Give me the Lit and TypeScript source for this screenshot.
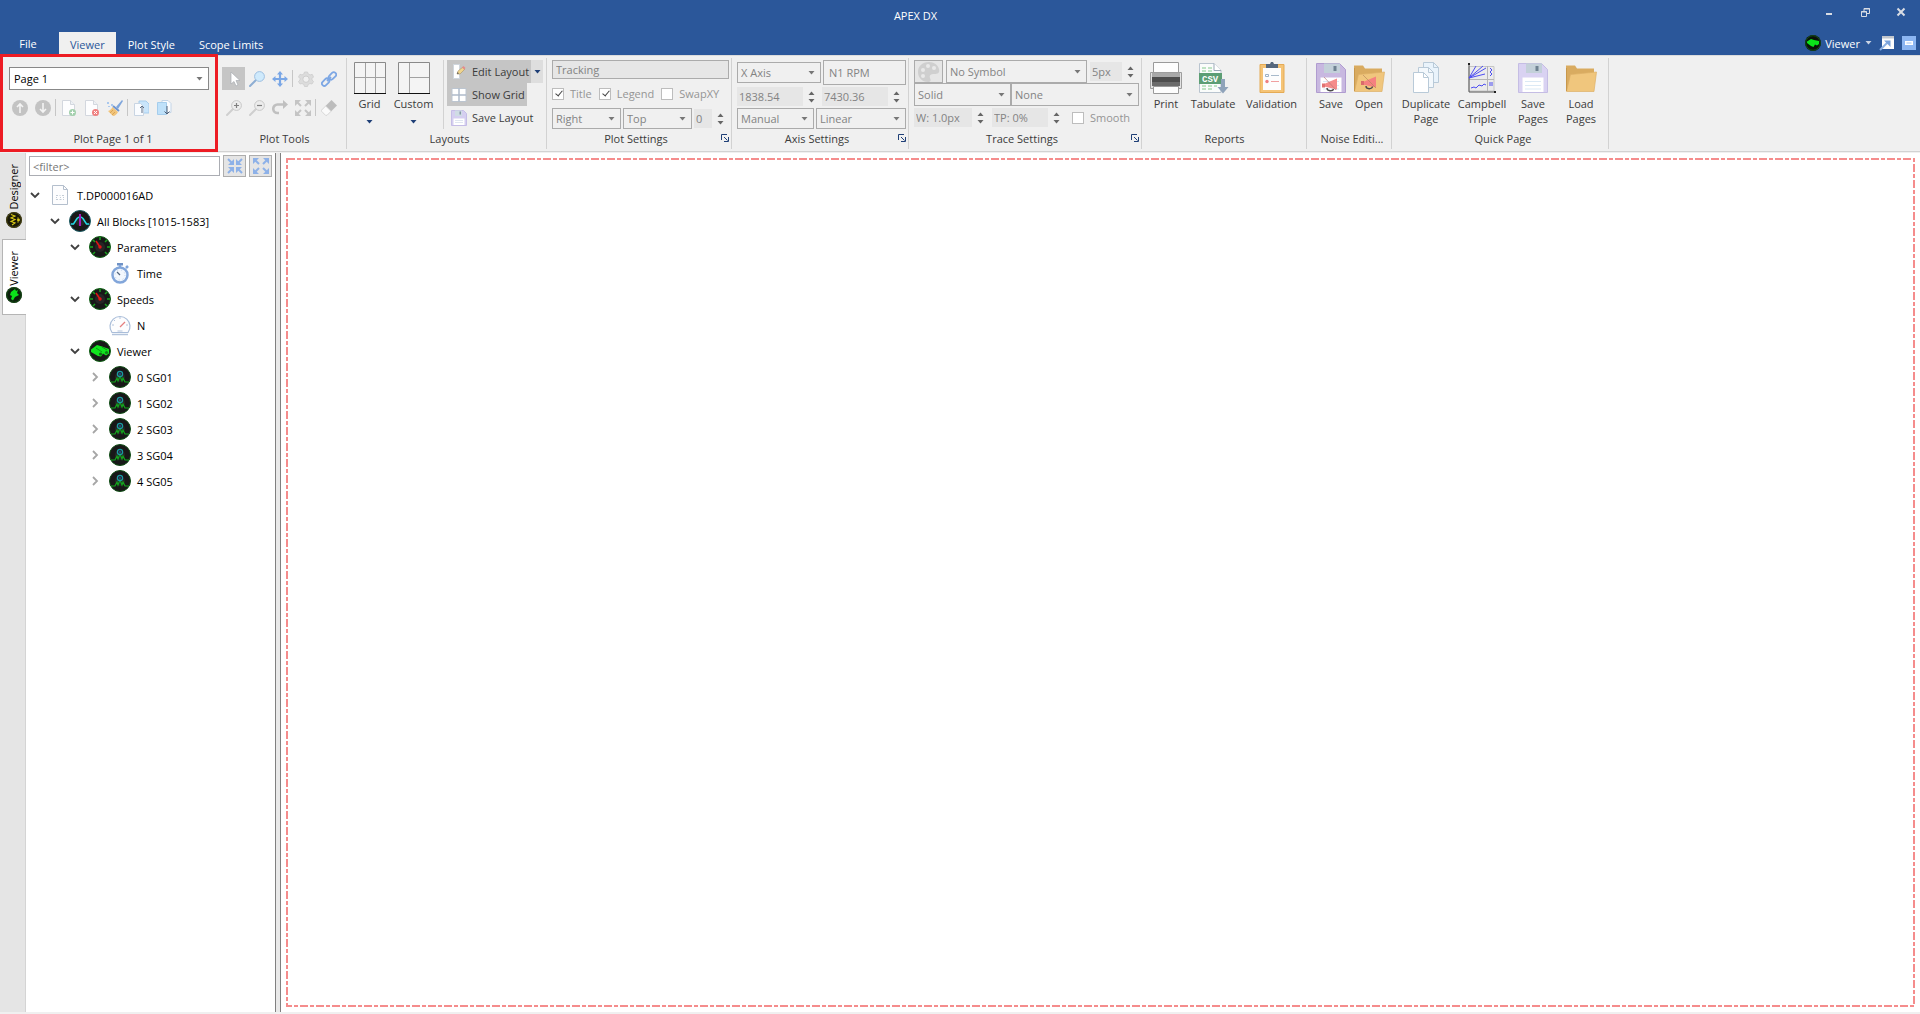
import { LitElement, html, svg, css } from "lit";
import { customElement, property } from "lit/decorators.js";

const draw = (size: number, body: unknown) =>
  html`<svg class="icon" width=${size} height=${size} viewBox="0 0 ${size} ${size}" aria-hidden="true">${body}</svg>`;

/* ---------- small toolbar glyphs, 16 px ---------- */
const circleArrow = (d: string) => svg`<circle cx="8" cy="8" r="8" fill="#c3c3c3"/><path d=${d} fill="none" stroke="#f4f4f4" stroke-width="1.6"/>`;
const sheet = svg`<path d="M1.5 .5h8l4 4v11h-12z" fill="#fdfdfe" stroke="#d3d7de"/><path d="M9.5 .5v4h4" fill="#eef1f5" stroke="#d3d7de"/>`;
const lens = (fill: string, ring: string, handle: string, mark: unknown) => svg`
  <path d="M1 15l6-6" stroke=${handle} stroke-width="2" stroke-linecap="round"/>
  <circle cx="10.5" cy="5.5" r="4.9" fill=${fill} stroke=${ring}/>${mark}`;
const corners = (color: string, lines: string, heads: string) =>
  svg`<path d=${lines} fill="none" stroke=${color} stroke-width="2"/><path d=${heads} fill=${color}/>`;
const OUT = ["M2 2l4 4M14 2l-4 4M2 14l4-4M14 14l-4-4", "M0 0h6L0 6zM16 0v6l-6-6zM0 16v-6l6 6zM16 16h-6l6-6z"];
const IN = ["M1 1l4 4M15 1l-4 4M1 15l4-4M15 15l-4-4", "M7 1v6H1zM9 1v6h6zM7 15V9H1zM9 15V9h6z"];

const small: Record<string, unknown> = {
  up: circleArrow("M8 13V4M5 7l3-3 3 3"),
  down: circleArrow("M8 3v9M5 9l3 3 3-3"),
  addPage: svg`${sheet}<circle cx="11.5" cy="12.5" r="3.5" fill="#a3d0ad"/><path d="M11.5 10.5v4M9.500 12.5h4" stroke="#fff"/>`,
  delPage: svg`${sheet}<circle cx="11.5" cy="12.5" r="3.5" fill="#f08080"/><path d="M10 11l3 3M13 11l-3 3" stroke="#fff"/>`,
  broom: svg`<path d="M9 7l6-7 1 1-5 8z" fill="#7fa6dc"/><path d="M6 6l6 5" stroke="#6f95cf" stroke-width="2"/><path d="M5.5 7l5.500 5c-1 2-3 4-5 4l-5-5c2-.5 3.500-2 4.500-4z" fill="#f1c47b"/><path d="M3 13l3-3M5 15l3-3" stroke="#d9a557"/><path d="M0 2h2v2H0zM4 4h2v2H4zM1 6h2v1H1z" fill="#a9c8ee"/>`,
  pageUp: svg`<path d="M6 1h7l3 3v9H6z" fill="#c9e5fb" stroke="#a8cdec"/><path d="M1.5 3.5h6l3 3v9h-9z" fill="#fafcff" stroke="#c9d5e3"/><path d="M9 13V6M7 8l2-2 2 2" fill="none" stroke="#5c6e86"/>`,
  pageDown: svg`<path d="M6 .5h6l3 3v9H6z" fill="#fafcff" stroke="#c3d4e6"/><path d="M1.5 2.5h9v12h-9z" fill="#bfe1fa" stroke="#a5cdec"/><path d="M11 6v8M8.5 11.5L11 14l2.500-2.500" fill="none" stroke="#4f5f76"/>`,
  pointer: svg`<path d="M5 1v12l3-2.500 2 4.500 2-1-2-4.500h4z" fill="#fff" stroke="#a9adb3" stroke-width=".7"/>`,
  zoom: lens("#cfeafc", "#9ebfe0", "#8eaed3", null),
  zoomIn: lens("#ececec", "#c8c8c8", "#cfcfcf", svg`<path d="M10.5 3v5M8 5.5h5" stroke="#808080" stroke-width="1.2"/>`),
  zoomOut: lens("#ececec", "#c8c8c8", "#cfcfcf", svg`<path d="M8 5.5h5" stroke="#808080" stroke-width="1.2"/>`),
  move: svg`<path d="M8 2v12M2 8h12" stroke="#7aa7e6" stroke-width="2.2"/><path d="M8 0l3 3.500H5zM8 16l3-3.500H5zM0 8l3.500-3v6zM16 8l-3.500-3v6z" fill="#7aa7e6"/>`,
  gear: svg`<path d="M6.5 1h3l.7 2 2 .9 2-.6 1.300 2.600L14 7.500v1.500l1.500 1.500-1.500 2.500-2-.5-1.800 1-.7 2h-3l-.7-2-1.800-1-2 .5L.5 10.500 2 9V7.500L.5 5.900 2 3.300l2 .6 1.800-.9z" fill="#dcdcdc" stroke="#cdcdcd" stroke-width=".8"/><circle cx="8" cy="8.2" r="3.2" fill="#f0f0f0" stroke="#cdcdcd"/>`,
  link: svg`<g fill="none" stroke="#7da7e4" stroke-width="1.8"><rect x="7.2" y="2.6" width="8.5" height="4.8" rx="2.4" transform="rotate(-45 11.4 5)"/><rect x=".4" y="8.8" width="8.5" height="4.8" rx="2.4" transform="rotate(-45 4.6 11.2)"/><path d="M6 10l4-4"/></g>`,
  redo: svg`<path d="M12 4.500H5.500a4 4 0 0 0 0 8.500H7" fill="none" stroke="#c0c0c0" stroke-width="2.6"/><path d="M11 0l5 4.500-5 4.500z" fill="#c0c0c0"/>`,
  expandGrey: corners("#c4c4c4", OUT[0], OUT[1]),
  expand: corners("#8db1e8", OUT[0], OUT[1]),
  collapse: corners("#8db1e8", IN[0], IN[1]),
  eraser: svg`<path d="M10.500 0L16 5.500l-6 6L4.500 6z" fill="#bcbcbc"/><path d="M4.700 6L10 11.300 6 15.300H4.500L.5 11.200v-1z" fill="#fafafa" stroke="#cfcfcf" stroke-width=".8"/>`,
  editLayout: svg`<path d="M2.5 .5h6v14h-6z" fill="#fff" stroke="#cfd6de"/><path d="M6 10l1-3 5-4 2 2-5 5z" fill="#f0d48c" stroke="#a8936a" stroke-width=".6"/><path d="M11 3.500L12.500 2l2 2L13 5.500z" fill="#e58b8b"/><path d="M6 10l.6-2 1.400 1.400z" fill="#555"/>`,
  showGrid: svg`<path d="M1 1.500h14v13H1z" fill="#fff" stroke="#bcc5d0"/><path d="M8 1.500v13M1 8h14" stroke="#aebaca" stroke-width="1.5"/>`,
  disk: svg`<path d="M.5.5h12l3 3v12H.5z" fill="#d5cff0" stroke="#c5bde6"/><path d="M4 .5h7V6H4z" fill="#cfdce4"/><path d="M8.5 1.500h1.500v3H8.500z" fill="#8496a4"/><path d="M2.500 8.500h11V15h-11z" fill="#fff"/><path d="M4 10.500h8M4 12.500h8" stroke="#dfe6f0"/>`,
  popout: svg`<path d="M3 1h12v13H3z" fill="#fdfdfd"/><path d="M3 1h12v2.500H3z" fill="#c1c6cd"/><path d="M1 15l8-8" stroke="#8bb0e2" stroke-width="2"/><path d="M5 5.500h6.500V12z" fill="#7aa3dc"/>`,
  minRibbon: svg`<path d="M1 1h14v14H1z" fill="#8cb6f2"/><path d="M4 6h8v4H4z" fill="#fff"/><path d="M5.500 8h5" stroke="#8cb6f2" stroke-width=".8"/>`,
  minimise: svg`<path d="M5 9h6v2H5z" fill="#d9dde4"/>`,
  restore: svg`<g fill="none" stroke="#d9dde4"><path d="M4.500 7.500h5v5h-5zM7 7V4.500h5.500v5H10"/><path d="M4 8h6M7 5h6" /></g>`,
  close: svg`<path d="M4.500 4.500l7 7M11.500 4.500l-7 7" stroke="#d9dde4" stroke-width="2"/>`,
  designer: svg`<circle cx="8" cy="8" r="8" fill="#191908"/><circle cx="8" cy="8" r="7.3" fill="none" stroke="#4f4a12"/><path d="M5 2.500l4 1.500-4 2 4 1.500-4 2 4 1.500-3 2" fill="none" stroke="#d9c916" stroke-width="1.1"/><path d="M12 5v6" stroke="#8f8612"/><circle cx="12.5" cy="8" r="1.4" fill="#d9c916"/>`,
  viewerTab: svg`<circle cx="8" cy="8" r="8" fill="#0d1f0d"/><circle cx="8" cy="8" r="7.3" fill="none" stroke="#155015"/><path d="M9 2L5 5 4 8l2 1-1 3 2 1.500 2-3.500 4-2-2-2 1-3-2 1z" fill="#0be31a"/>`,
  viewerTop: svg`<circle cx="8" cy="8" r="8" fill="#0a120a"/><circle cx="8" cy="8" r="7.3" fill="none" stroke="#145014"/><path d="M2 6.500L6 4l3 1 5 1v3l-2 1.500-2-1L8.500 12 6 11 2 8z" fill="#0be31a"/>`,
};

/* ---------- large ribbon glyphs, 32 px ---------- */
const diskBig = (body: string, edge: string, extra: unknown) => svg`
  <path d="M1.500 1.500h23l6 6v23h-29z" fill=${body} stroke=${edge}/>
  <path d="M9 1.500h16v9.500H9z" fill="#c3d0d9"/><path d="M18.500 4h3v5h-3z" fill="#6f8291"/>
  <path d="M5.500 15.500h21V30h-21z" fill="#fff"/><path d="M8 19.500h16M8 23.500h16M8 27h16" stroke="#dbe9f5"/>${extra}`;
const horn = svg`<path d="M9 22l13-5.500v11L9 24.500z" fill="#f58b8b"/><path d="M7 21.500h3v4H7z" fill="#e07272"/><path d="M12 26c0 3.500 6 3.500 6.500 1" fill="none" stroke="#4a4a4a" stroke-width="1.4"/><path d="M9 15l12 13" stroke="#b87878" stroke-width=".7"/>`;
const folder = (extra: unknown) => svg`<path d="M1 3.500h9l2 3h17V28H1z" fill="#d9ab60"/><path d="M5.500 12.500L31.500 10 29 29.500H1.500z" fill="#f0c67d" stroke="#dcb067" stroke-width=".7"/><path d="M1.500 29V6" stroke="#c8984c"/>${extra}`;
const copySheet = (x: number, y: number, fill: string) => svg`<path d="M${x + 0.5} ${y + 0.5}h10l5 5v15h-15z" fill=${fill} stroke="#b9cad8"/><path d="M${x + 10.5} ${y + 0.5}v5h5" fill="none" stroke="#b9cad8"/>`;

const large: Record<string, unknown> = {
  grid: svg`<path d="M.5.5h31v31H.5z" fill="#f4f4f4" stroke="#8a8a8a"/><path d="M11.500 1v30M21.500 1v30M1 15.500h30" stroke="#a2a2a2"/><path d="M0 31.500h32" stroke="#111"/>`,
  custom: svg`<path d="M.5.5h31v31H.5z" fill="#f4f4f4" stroke="#8a8a8a"/><path d="M11.500 1v30M11 15.500h20" stroke="#a2a2a2"/><path d="M0 31.500h32" stroke="#111"/>`,
  print: svg`<path d="M3.500.5h25v12h-25z" fill="#fdfdfd" stroke="#9a9a9a"/><path d="M.5 10.500h31v16H.5z" fill="#e3e3e3" stroke="#9d9d9d"/><path d="M2 11h28v4H2z" fill="#a8a8a8"/><path d="M2 15h28v5H2z" fill="#4d4d4d"/><path d="M2 20h28v4H2z" fill="#6b6b6b"/><path d="M3.500 24.500h25v7h-25z" fill="#fdfdfd" stroke="#9a9a9a"/>`,
  csv: svg`<path d="M2.500 1.500h14.500l7 7v22H2.500z" fill="#fafcfb" stroke="#b9c4cf"/><path d="M17 1.500v7h7" fill="#fff" stroke="#9aa8b6"/><path d="M5 6h4M11 6h4M5 9h4M11 9h4M5 24h4M11 24h4M5 27h4M11 27h4M17 24h3" stroke="#bfe3c4" stroke-width="1.8"/><path d="M2 11h23v11H2z" fill="#5c9e74"/><text x="5" y="20" font-size="9" font-weight="bold" fill="#fff" font-family="Liberation Mono, monospace">CSV</text><path d="M24 17h4v8h3.500L26 31.500 20.500 25H24z" fill="#8fa3ba"/>`,
  clip: svg`<path d="M4 2.500h24v28H4z" fill="#f5c477" stroke="#e5ab55"/><path d="M7 6h18v22H7z" fill="#fdfdfd"/><path d="M10 6V2h4l1-2h2l1 2h4v4z" fill="#56677c"/><path d="M9.500 12.500h3v2h-3z" fill="#fff" stroke="#9db1c5"/><circle cx="11" cy="19.500" r="1.7" fill="#ee8080"/><path d="M15 13.500h8" stroke="#a8bacb"/><path d="M15 19.500h8" stroke="#f0a0a0"/>`,
  saveNoise: diskBig("#c8b8e0", "#b09cd0", horn),
  openNoise: folder(svg`<path d="M10 20l13-5.500v11L10 22.500z" fill="#f58080"/><path d="M8 19h3v4H8z" fill="#d96b6b"/><path d="M13 24c0 3.500 6 3.500 6.500 .5" fill="none" stroke="#4a4a4a" stroke-width="1.4"/><path d="M10 13l13 13" stroke="#b98a5c" stroke-width=".7"/>`),
  duplicate: svg`${copySheet(13, 0, "#e9f3fb")}${copySheet(8, 5, "#f3f8fc")}${copySheet(3, 10, "#fff")}`,
  campbell: svg`<path d="M3 4.500h25V29H3z" fill="#ebebeb" stroke="#c5c5c5"/><path d="M21.500 4v25M3 17.500h25" stroke="#b5b5b5"/><path d="M3 2v28h27" fill="none" stroke="#555"/><path d="M2 1h2v2H2zM28 29h2v2h-2z" fill="#222"/><path d="M3 16L10 4M3 16L17 4M3 16L20 6M3 16l16-4M5 26l3-1 2 1 3-3 3 1 2-2 2 1M24 6l2 2-2 2 2 2-2 2M23 21h4M23 23h4" fill="none" stroke="#4d4df2"/>`,
  savePages: diskBig("#d9d2f2", "#c5bde4", null),
  loadPages: folder(null),
};

/* ---------- tree glyphs, 22 px ---------- */
const dial = (ring: string, body: unknown) => svg`<circle cx="11" cy="11" r="10.5" fill="#181818" stroke=${ring}/><circle cx="11" cy="11" r="5" fill="#262626"/>${body}`;
const tree: Record<string, unknown> = {
  file: svg`<path d="M3.500 1.500h11l4 4v15h-15z" fill="#fdfdfe" stroke="#b4bfcd"/><path d="M14.500 1.500v4h4" fill="none" stroke="#b4bfcd"/><path d="M7 11.500h2M10.500 11.500h1M13 11.500h2M7 15.500h2M10.500 15.500h2M14 15.500h1M7 13.500h1M11 13.500h1M14 13.500h1" stroke="#c3ccd6"/>`,
  blocks: dial("#1d5b63", svg`<path d="M2 14h2.500L8 8.500l2-1.500M12 7l2 1.500 3.500 5.500H20" fill="none" stroke="#25dbe6" stroke-width="1.5"/><path d="M11 4v12" stroke="#a21ab8" stroke-width="2"/>`),
  gauge: dial("#0f5f14", svg`<path d="M11 1v3M1 11h3M18 11h3M4 4l2 2M18 4l-2 2M4 18l2-2M18 18l-2-2" stroke="#19a51f" stroke-width="1.5"/><path d="M11 11L7 5" stroke="#e01515" stroke-width="1.5"/><circle cx="11" cy="11" r="1.7" fill="#e01515"/>`),
  watch: svg`<circle cx="11" cy="13" r="7.5" fill="#f2f7fd" stroke="#82a6da" stroke-width="2.5"/><path d="M8 1h6v2.500H8z" fill="#6f92c6"/><path d="M11 3v3M17 6l2-2" stroke="#82a6da" stroke-width="2.5"/><path d="M11 13L8 10" stroke="#53657e" stroke-width="1.2"/><circle cx="11" cy="13" r="5" fill="none" stroke="#c0d3ec" stroke-dasharray="1 3"/>`,
  meter: svg`<path d="M3 18.500A10 10 0 1 1 19 18.500z" fill="#fdfdfe" stroke="#a9bdd9" stroke-width="1.2"/><path d="M3 20.500h16" stroke="#b3c4dc" stroke-width="1.5"/><path d="M11 3v2M5 6l1 1M3 11h2M17 11h2" stroke="#b3c4dc"/><path d="M11 13l5-5" stroke="#e57f7f" stroke-width="1.3"/><path d="M8.500 17h5" stroke="#b3c4dc"/>`,
  binoculars: dial("#0f5f14", svg`<path d="M2 9.500L8 5l5 1.500L20 9v4.500l-3 2-3-2-2 3-3-.5-7-4z" fill="#11e51e"/><path d="M7 8l6 4M13 7l5 3" stroke="#0a9a14"/><circle cx="11.500" cy="14" r="1.6" fill="#0c6d12"/><circle cx="17.500" cy="12.500" r="1.6" fill="#0c8a14"/>`),
  signal: dial("#0f4c14", svg`<path d="M2 16h4l2-4 1 3 2-5 2 5 1-3 2 4h4" fill="none" stroke="#13a51c" stroke-width="1.2"/><circle cx="11" cy="8" r="2.6" fill="none" stroke="#1a9aa3" stroke-width="1.2"/><path d="M10 8h2" stroke="#1c5fd0"/>`),
};

const caret = (cls = "") => html`<svg class="caret ${cls}" width="7" height="4" viewBox="0 0 7 4" aria-hidden="true"><path d="M0.500 0h6L3.500 3.500z" fill="currentColor"/></svg>`;

const shared = css`
  * { box-sizing: border-box; }
  button, input, select { font: inherit; color: inherit; margin: 0; padding: 0; border: 0; border-radius: 0; background: none; outline: none; }
  button { display: inline-flex; align-items: center; justify-content: center; white-space: nowrap; }
  .icon, .caret { display: block; flex: none; }
`;

interface Row { level: number; icon: string; text: string; state: "open" | "closed" | "leaf"; }

@customElement("tree-panel")
export class TreePanel extends LitElement {
  @property({ attribute: false }) rows: Row[] = [
    { level: 0, icon: "file", text: "T.DP000016AD", state: "open" },
    { level: 1, icon: "blocks", text: "All Blocks [1015-1583]", state: "open" },
    { level: 2, icon: "gauge", text: "Parameters", state: "open" },
    { level: 3, icon: "watch", text: "Time", state: "leaf" },
    { level: 2, icon: "gauge", text: "Speeds", state: "open" },
    { level: 3, icon: "meter", text: "N", state: "leaf" },
    { level: 2, icon: "binoculars", text: "Viewer", state: "open" },
    ...["0 SG01", "1 SG02", "2 SG03", "3 SG04", "4 SG05"].map(
      (text): Row => ({ level: 3, icon: "signal", text, state: "closed" })),
  ];

  static styles = [shared, css`
    :host { display: block; background: #fff; }
    .bar { display: flex; gap: 3px; padding: 2px 3px 0 3px; align-items: center; }
    .filter { flex: 1; min-width: 0; height: 20px; border: 1px solid #abadb3; padding: 0 3px; color: #222; }
    .filter::placeholder { color: #777; opacity: 1; }
    .tool { width: 23px; height: 22px; border: 1px solid #adadad; background: #e5e5e5; }
    ul { list-style: none; margin: 5px 0 0; padding: 0; }
    li { display: flex; align-items: center; height: 26px; }
    .l1 { padding-left: 20px; }
    .l2 { padding-left: 40px; }
    .l3 { padding-left: 60px; }
    .twist { width: 18px; height: 26px; flex: none; }
    .pic { display: flex; justify-content: center; width: 32px; }
    .text { color: #000; white-space: nowrap; padding-left: 1px; }
  `];

  private twist(row: Row) {
    if (row.state === "leaf") return html`<span class="twist"></span>`;
    const open = row.state === "open";
    return html`<button class="twist" aria-label=${(open ? "Collapse " : "Expand ") + row.text}>
      <svg class="icon" width="10" height="10" viewBox="0 0 10 10"><path d=${open ? "M1 3l4 4 4-4" : "M3 1l4 4-4 4"} fill="none" stroke=${open ? "#404040" : "#a6a6a6"} stroke-width="1.8"/></svg>
    </button>`;
  }

  render() {
    return html`
      <div class="bar">
        <input class="filter" placeholder="&lt;filter&gt;" aria-label="Filter" />
        <button class="tool" aria-label="Collapse all">${draw(16, small.collapse)}</button>
        <button class="tool" aria-label="Expand all">${draw(16, small.expand)}</button>
      </div>
      <ul>
        ${this.rows.map(r => html`<li class="l${r.level}">${this.twist(r)}<span class="pic">${draw(22, tree[r.icon])}</span><span class="text">${r.text}</span></li>`)}
      </ul>`;
  }
}

@customElement("app-ribbon")
export class AppRibbon extends LitElement {
  static styles = [shared, css`
    :host { display: flex; background: #f0f0f0; border-top: 1px solid #dadbdc; border-bottom: 1px solid #d2d2d2; height: 97px; color: #3b3b3b; }
    .group { position: relative; display: flex; flex-direction: column; flex: none; padding: 4px 0 0 5px; }
    .group::after { content: ""; position: absolute; right: 0; top: 2px; bottom: 2px; width: 1px; background: #d2d2d2; }
    .body { height: 69px; display: flex; }
    .name { display: flex; align-items: center; height: 18px; }
    .name span { flex: 1; text-align: center; white-space: nowrap; }
    .page { width: 218px; padding-left: 8px; }
    .page::after { display: none; }
    .mark { position: absolute; inset: -2px 0 -1px 0; border: 3px solid #ed1c24; pointer-events: none; }
    .tools { width: 129px; padding-left: 4px; }
    .layouts { width: 200px; }
    .plot { width: 185px; padding-right: 3px; }
    .axis { width: 177px; padding-right: 3px; }
    .trace { width: 233px; padding-right: 3px; }
    .reports { width: 165px; padding-left: 0; }
    .noise { width: 85px; }
    .quick { width: 217px; }

    .col { display: flex; flex-direction: column; flex: 1; }
    .row { display: flex; align-items: center; gap: 2px; }
    .between { justify-content: space-between; }
    .grow { flex: 1; min-width: 0; }
    .two { padding-top: 7px; gap: 6px; }
    .two .row { gap: 0; }
    .mini { width: 23px; height: 23px; }
    .on { background: #c5c5c5; }
    .bar { width: 1px; height: 17px; margin: 0 1px; background: #c6c6c6; }

    .pick { display: grid; align-items: center; height: 21px; min-width: 0; }
    .pick > * { grid-area: 1 / 1; }
    .pick .caret { justify-self: end; margin-right: 6px; pointer-events: none; color: #777; }
    select { appearance: none; width: 100%; height: 100%; padding: 0 16px 0 3px; border: 1px solid #ababab; color: #838383; opacity: 1; }
    .live { height: 23px; width: 200px; margin-left: 1px; }
    .live select { background: #fff; border-color: #888; color: #000; padding-left: 4px; }
    .text { height: 19px; border: 1px solid #ababab; background: #e6e6e6; color: #838383; padding: 0 3px; width: 100%; }
    .plain { height: 25px; background: #f0f0f0; padding: 0 5px; }
    .num { display: flex; align-items: center; height: 19px; }
    .num input { height: 19px; background: #e6e6e6; color: #838383; padding: 0 2px; min-width: 0; }
    .spin { display: flex; flex-direction: column; width: 17px; gap: 4px; color: #666; }
    .spin button { height: 4px; width: 17px; }
    .flip { transform: rotate(180deg); }
    .w17 { width: 18px; } .w32 { width: 32px; } .w56 { width: 56px; } .w58 { width: 58px; } .w66 { width: 66px; }
    .p68 { width: 69px; } .p77 { width: 77px; } .p84 { width: 84px; } .p97 { width: 97px; }
    .checks { gap: 7px; }
    .check { display: flex; align-items: center; gap: 6px; color: #959595; }
    .check input { appearance: none; display: grid; width: 12px; height: 12px; border: 1px solid #bdbdbd; background: #fff; }
    .check input:checked::before { content: ""; width: 3px; height: 6px; margin: 0 0 2px 4px; align-self: center; border: solid #444; border-width: 0 1px 1px 0; transform: rotate(40deg); }
    .snug .row { gap: 0; }
    .snug .pick { height: 23px; }
    .snug .spaced { gap: 3px; }
    .snug .last { margin-top: 2px; }
    .snug .check { margin-left: 4px; }

    .big { flex-direction: column; justify-content: flex-start; align-items: center; padding: 2px 0 0; line-height: 15px; }
    .big .cap { padding-top: 2px; text-align: center; white-space: pre-line; }
    .big .caret { margin-top: 9px; color: #1f3f77; }
    .b34 { width: 35px; } .b52 { width: 53px; margin-right: 3px; }
    .b38 { width: 38px; } .b46 { width: 46px; } .b48 { width: 48px; } .b54 { width: 54px; } .b58 { width: 58px; } .b70 { width: 71px; }
    .rule { width: 1px; height: 69px; background: #d2d2d2; }
    .line { height: 23px; padding: 0 2px 0 4px; gap: 5px; }
    .split { width: 12px; height: 23px; background: #dedede; color: #1f3f77; }
    .list { align-items: flex-start; padding-left: 3px; }
    .list .row { gap: 0; }
    .launch { width: 9px; height: 9px; }
    .palette { width: 29px; height: 23px; border: 1px solid #ababab; background: #e6e6e6; }
  `];

  private mini(icon: string, label: string, cls = "") {
    return html`<button class="mini ${cls}" aria-label=${label} title=${label}>${draw(16, small[icon])}</button>`;
  }
  private pick(value: string, label: string, cls = "") {
    return html`<span class="pick ${cls}"><select aria-label=${label}><option>${value}</option></select>${caret()}</span>`;
  }
  private num(value: string, label: string, cls: string) {
    return html`<span class="num"><input class=${cls} aria-label=${label} .value=${value} />
      <span class="spin"><button aria-label="Increase ${label}">${caret("flip")}</button><button aria-label="Decrease ${label}">${caret()}</button></span></span>`;
  }
  private check(label: string, on: boolean) {
    return html`<label class="check"><input type="checkbox" ?checked=${on} />${label}</label>`;
  }
  private big(icon: string, label: string, cls = "", drop = false) {
    return html`<button class="big ${cls}">${draw(32, large[icon])}<span class="cap">${label}</span>${drop ? caret() : null}</button>`;
  }
  private name(text: string, launch = false) {
    return html`<div class="name"><span>${text}</span>${launch
      ? html`<button class="launch" aria-label="${text} options"><svg class="icon" width="8" height="8" viewBox="0 0 8 8"><path d="M.5 6V.5H6M3 3l3.500 3.500M7.500 3v4.500H3" fill="none" stroke="#1f3f77"/></svg></button>`
      : null}</div>`;
  }

  render() {
    return html`
      <section class="group page">
        <div class="body"><div class="col two">
          ${this.pick("Page 1", "Page", "live")}
          <div class="row">
            ${this.mini("up", "Move page up")}${this.mini("down", "Move page down")}<i class="bar"></i>
            ${this.mini("addPage", "Add page")}${this.mini("delPage", "Delete page")}${this.mini("broom", "Clear page")}<i class="bar"></i>
            ${this.mini("pageUp", "Export page")}${this.mini("pageDown", "Import page")}
          </div>
        </div></div>
        ${this.name("Plot Page 1 of 1")}
        <div class="mark"></div>
      </section>

      <section class="group tools">
        <div class="body"><div class="col two">
          <div class="row">${this.mini("pointer", "Select", "on")}${this.mini("zoom", "Zoom")}${this.mini("move", "Pan")}<i class="bar"></i>${this.mini("gear", "Settings")}${this.mini("link", "Link")}</div>
          <div class="row">${this.mini("zoomIn", "Zoom in")}${this.mini("zoomOut", "Zoom out")}${this.mini("redo", "Redo")}${this.mini("expandGrey", "Fit")}<i class="bar"></i>${this.mini("eraser", "Erase")}</div>
        </div></div>
        ${this.name("Plot Tools")}
      </section>

      <section class="group layouts">
        <div class="body">
          ${this.big("grid", "Grid", "b34", true)}
          ${this.big("custom", "Custom", "b52", true)}
          <i class="rule"></i>
          <div class="col list">
            <div class="row"><button class="line on">${draw(16, small.editLayout)}Edit Layout</button><button class="split" aria-label="Edit layout menu">${caret()}</button></div>
            <button class="line on">${draw(16, small.showGrid)}Show Grid</button>
            <button class="line">${draw(16, small.disk)}Save Layout</button>
          </div>
        </div>
        ${this.name("Layouts")}
      </section>

      <section class="group plot">
        <div class="body"><div class="col between">
          <div class="row"><input class="text grow" aria-label="Plot title" .value=${"Tracking"} /></div>
          <div class="row checks">${this.check("Title", true)}${this.check("Legend", true)}${this.check("SwapXY", false)}</div>
          <div class="row">${this.pick("Right", "Legend side", "p68")}${this.pick("Top", "Legend position", "p68")}${this.num("0", "Offset", "w17")}</div>
        </div></div>
        ${this.name("Plot Settings", true)}
      </section>

      <section class="group axis">
        <div class="body"><div class="col between">
          <div class="row">${this.pick("X Axis", "Axis", "p84")}<input class="text plain grow" aria-label="Axis title" .value=${"N1 RPM"} /></div>
          <div class="row">${this.num("1838.54", "Minimum", "w66")}${this.num("7430.36", "Maximum", "w66")}</div>
          <div class="row">${this.pick("Manual", "Range mode", "p77")}${this.pick("Linear", "Scale", "grow")}</div>
        </div></div>
        ${this.name("Axis Settings", true)}
      </section>

      <section class="group trace">
        <div class="body"><div class="col snug">
          <div class="row spaced"><button class="palette" aria-label="Trace colour"><svg class="icon" width="22" height="20" viewBox="0 0 22 20"><path d="M11 0C4 0 0 4.500 0 10s4 10 10 10c3 0 3-2 2-4-1-3 1-4 4-4 4 0 6-1 5-5-1-4-5-7-10-7z" fill="#cfcfcf"/><g fill="#e9e9e9"><circle cx="5" cy="8" r="2"/><circle cx="10" cy="4" r="2"/><circle cx="16" cy="6" r="2"/><circle cx="5" cy="14" r="2"/></g></svg></button>${this.pick("No Symbol", "Symbol", "grow")}${this.num("5px", "Symbol size", "w32")}</div>
          <div class="row">${this.pick("Solid", "Line style", "p97")}${this.pick("None", "Fill", "grow")}</div>
          <div class="row spaced last">${this.num("W: 1.0px", "Width", "w58")}${this.num("TP: 0%", "Transparency", "w56")}${this.check("Smooth", false)}</div>
        </div></div>
        ${this.name("Trace Settings", true)}
      </section>

      <section class="group reports">
        <div class="body">${this.big("print", "Print", "b48")}${this.big("csv", "Tabulate", "b46")}${this.big("clip", "Validation", "b70")}</div>
        ${this.name("Reports")}
      </section>
      <section class="group noise">
        <div class="body">${this.big("saveNoise", "Save", "b38")}${this.big("openNoise", "Open", "b38")}</div>
        ${this.name("Noise Editi...")}
      </section>
      <section class="group quick">
        <div class="body">${this.big("duplicate", "Duplicate\nPage", "b58")}${this.big("campbell", "Campbell\nTriple", "b54")}${this.big("savePages", "Save\nPages", "b48")}${this.big("loadPages", "Load\nPages", "b48")}</div>
        ${this.name("Quick Page")}
      </section>`;
  }
}

@customElement("app-root")
export class AppRoot extends LitElement {
  static styles = [shared, css`
    :host { display: flex; flex-direction: column; height: 100vh; font: 11px/15px "Open Sans", "Noto Sans", sans-serif; background: #f0f0f0; }
    header { background: #2b579a; color: #fff; display: grid; grid-template-rows: 32px 23px; }
    .title { display: flex; align-items: center; padding-left: 20px; }
    .title h1 { flex: 1; text-align: center; margin: 0; padding-bottom: 2px; font-size: 11px; font-weight: 400; }
    .win { display: flex; padding: 0 1px 8px 0; }
    .win button { width: 36px; height: 22px; }
    .tabs { display: flex; align-items: stretch; }
    .tabs .tab { padding: 1px 12px 0; }
    .tabs .file { width: 56px; margin-right: 3px; padding: 0; }
    .tabs .active { background: #f0f0f0; color: #2b579a; padding: 1px 11px 0; }
    .quick { margin-left: auto; display: flex; align-items: center; padding-bottom: 1px; }
    .quick .who { gap: 4px; padding-right: 4px; }
    .quick .who .caret { margin-left: 1px; color: #c9d3e4; }
    .quick .sq { width: 22px; height: 22px; }
    main { flex: 1; display: flex; min-height: 0; padding: 1px 0 2px; }
    .rail { width: 26px; background: #e5e5e5; display: flex; flex-direction: column; border-right: 1px solid #d4d4d4; }
    .rail button { flex-direction: column; gap: 2px; color: #000; }
    .rail .word { writing-mode: vertical-rl; transform: rotate(180deg); }
    .rail .first { height: 86px; padding: 0 0 0 2px; }
    .rail .second { height: 76px; margin: 0 -1px 0 2px; background: #fff; border: 1px solid #b5b5b5; border-right: 0; padding-right: 2px; }
    .side { width: 249px; }
    .splitter { width: 6px; background: #e9e9e9; border: solid #808080; border-width: 0 1px; }
    .canvas { flex: 1; background: #fff; padding: 6px; display: flex; min-width: 0; }
    .canvas svg { flex: 1; overflow: visible; width: 100%; height: 100%; }
    .frame { fill: #fff; stroke: #f58c8c; stroke-width: 2; stroke-dasharray: 8 2 4 2; }
  `];

  render() {
    return html`
      <header>
        <div class="title">
          <h1>APEX DX</h1>
          <div class="win">
            <button aria-label="Minimise">${draw(16, small.minimise)}</button>
            <button aria-label="Restore">${draw(16, small.restore)}</button>
            <button aria-label="Close">${draw(16, small.close)}</button>
          </div>
        </div>
        <nav class="tabs">
          <button class="tab file">File</button>
          <button class="tab active">Viewer</button>
          <button class="tab">Plot Style</button>
          <button class="tab">Scope Limits</button>
          <div class="quick">
            <button class="who">${draw(16, small.viewerTop)}Viewer ${caret()}</button>
            <button class="sq" aria-label="Pop out">${draw(16, small.popout)}</button>
            <button class="sq" aria-label="Collapse ribbon">${draw(16, small.minRibbon)}</button>
          </div>
        </nav>
      </header>
      <app-ribbon></app-ribbon>
      <main>
        <nav class="rail">
          <button class="first"><span class="word">Designer</span>${draw(16, small.designer)}</button>
          <button class="second"><span class="word">Viewer</span>${draw(16, small.viewerTab)}</button>
        </nav>
        <tree-panel class="side"></tree-panel>
        <div class="splitter"></div>
        <div class="canvas"><svg aria-hidden="true"><rect class="frame" width="100%" height="100%"/></svg></div>
      </main>`;
  }
}
